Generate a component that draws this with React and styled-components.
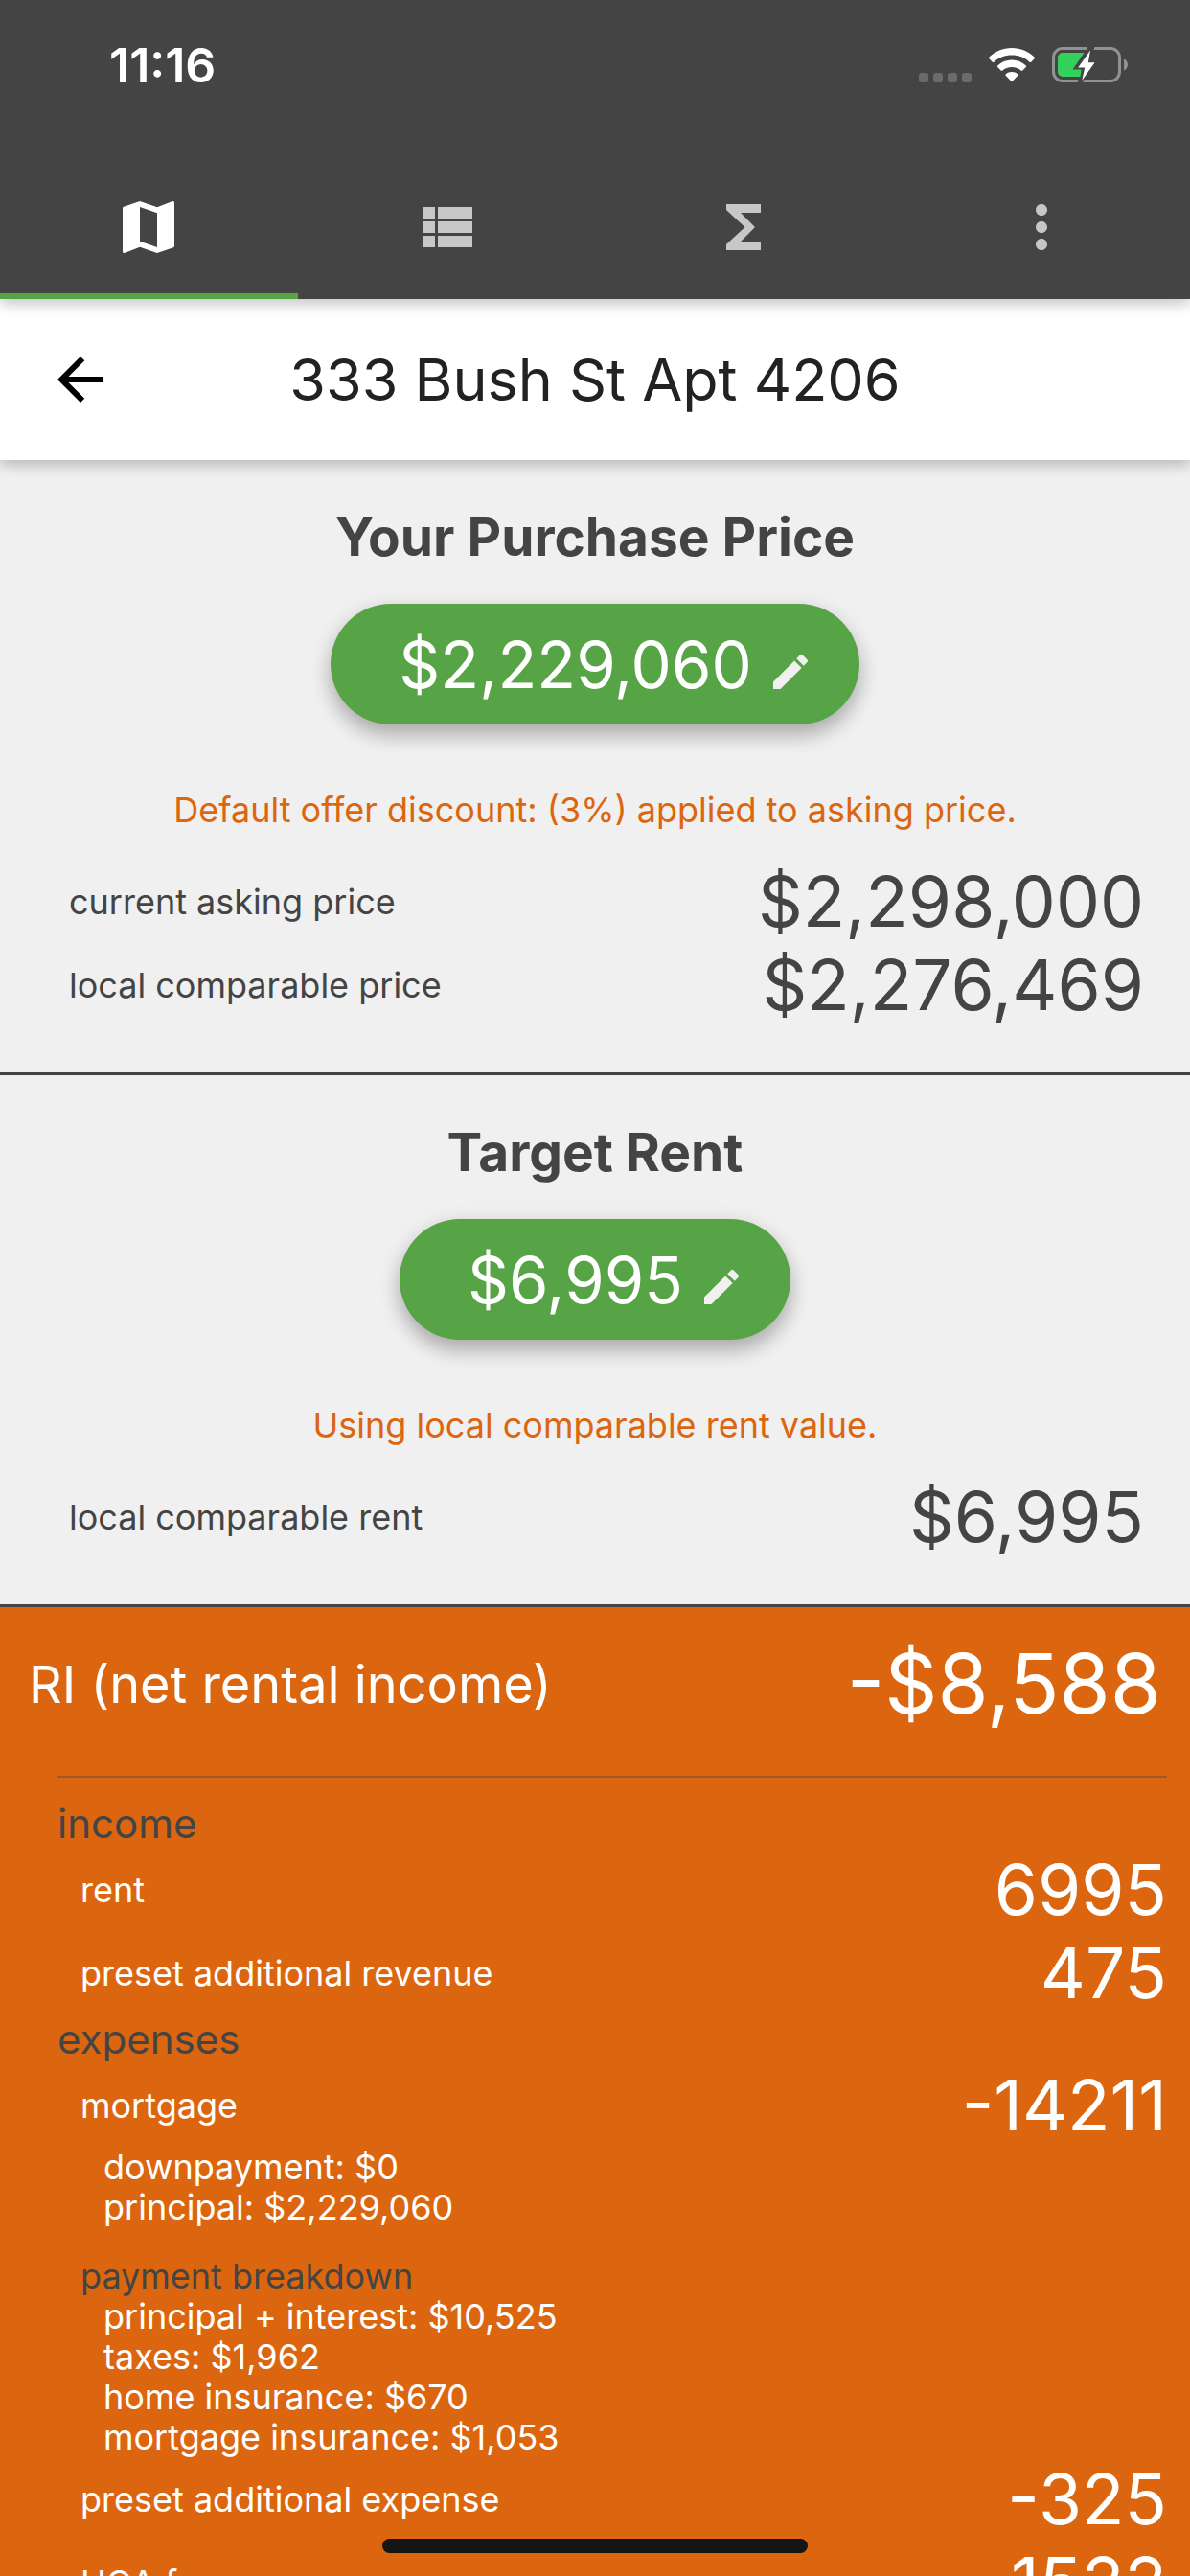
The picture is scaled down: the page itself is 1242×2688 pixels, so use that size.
import { useState } from 'react'
import styled, { createGlobalStyle } from 'styled-components'
import { MdMap, MdFunctions, MdMoreVert, MdEdit, MdArrowBack } from 'react-icons/md'

const tabs = [
  { id: 'map', label: 'Map', icon: <MdMap /> },
  { id: 'list', label: 'List', icon: <ListIcon /> },
  { id: 'totals', label: 'Totals', icon: <MdFunctions /> },
  { id: 'more', label: 'More', icon: <MdMoreVert /> },
]

function ListIcon() {
  return (
    <svg viewBox="0 0 24 24" width="1em" height="1em" fill="currentColor">
      <path d="M4 14h4v-4H4v4zm0 5h4v-4H4v4zM4 9h4V5H4v4zm5 5h12v-4H9v4zm0 5h12v-4H9v4zM9 5v4h12V5H9z" />
    </svg>
  )
}

function WifiIcon() {
  return (
    <svg viewBox="0 0 48 36" width="48" height="36" fill="#fff">
      <path d="M24 0C14.800 0 6.500 3.600.4 9.500a1.200 1.200 0 0 0 0 1.700l3.400 3.500c.5.500 1.200.5 1.700 0C10.300 10.200 16.800 7.600 24 7.600s13.700 2.600 18.500 7.100c.5.500 1.200.5 1.700 0l3.400-3.500a1.200 1.200 0 0 0 0-1.700C41.500 3.600 33.200 0 24 0z" />
      <path d="M24 12.600c-5.700 0-10.900 2.200-14.800 5.800a1.200 1.200 0 0 0 0 1.700l3.500 3.500c.4.500 1.100.5 1.600 0 2.600-2.300 6-3.600 9.700-3.600s7.100 1.300 9.700 3.600c.5.500 1.200.5 1.600 0l3.500-3.500a1.200 1.200 0 0 0 0-1.700c-3.900-3.600-9.100-5.800-14.800-5.800z" />
      <path d="M24 25c-2.400 0-4.500.9-6.200 2.300a1.200 1.200 0 0 0 0 1.700l5.400 5.600c.5.500 1.100.5 1.600 0l5.400-5.600a1.200 1.200 0 0 0 0-1.700C28.500 25.900 26.400 25 24 25z" />
    </svg>
  )
}

function BatteryIcon() {
  return (
    <svg viewBox="0 0 80 40" width="80" height="40">
      <rect x="1.500" y="2.500" width="69" height="34" rx="9.500" fill="none" stroke="#929292" strokeWidth="3" />
      <path d="M75 13.500c2.600 1 4 3.600 4 6s-1.400 5-4 6z" fill="#929292" />
      <path d="M11 7h22.500L21.600 24.500h9L29.500 32H11a5 5 0 0 1-5-5V12a5 5 0 0 1 5-5z" fill="#32d15b" />
      <path d="M38 0h7l-2.500 6h-8zM28 33h6.500l-3 6H26.500z" fill="#444" />
      <path d="M40 4.500 27.200 22.500h7L31.200 36 44.600 17.300h-6.800z" fill="#fff" />
    </svg>
  )
}

const incomeRows = [
  { label: 'rent', value: '6995' },
  { label: 'preset additional revenue', value: '475' },
]
const loanLines = ['downpayment: $0', 'principal: $2,229,060']
const paymentLines = [
  'principal + interest: $10,525',
  'taxes: $1,962',
  'home insurance: $670',
  'mortgage insurance: $1,053',
]
const otherExpenses = [
  { label: 'preset additional expense', value: '-325' },
  { label: 'HOA fees', value: '-1522' },
]

function PriceCard({ title, amount, note, rows }) {
  return (
    <Card>
      <CardTitle>{title}</CardTitle>
      <AmountButton>
        {amount}
        <MdEdit />
      </AmountButton>
      <Note>{note}</Note>
      <Rows>
        {rows.map((row) => (
          <Row key={row.label}>
            <dt>{row.label}</dt>
            <Value>{row.value}</Value>
          </Row>
        ))}
      </Rows>
    </Card>
  )
}

function App() {
  const [active, setActive] = useState('map')

  return (
    <>
      <GlobalStyle />
      <Screen>
        <TopBar>
          <StatusBar>
            <Clock>11:16</Clock>
            <StatusIcons>
              <Signal><i /><i /><i /><i /></Signal>
              <WifiIcon />
              <BatteryIcon />
            </StatusIcons>
          </StatusBar>
          <Tabs>
            {tabs.map((tab) => (
              <Tab key={tab.id} aria-label={tab.label} $active={active === tab.id} onClick={() => setActive(tab.id)}>
                {tab.icon}
              </Tab>
            ))}
          </Tabs>
        </TopBar>

        <Header>
          <BackButton aria-label="Back"><MdArrowBack /></BackButton>
          <Title>333 Bush St Apt 4206</Title>
        </Header>

        <PriceCard
          title="Your Purchase Price"
          amount="$2,229,060"
          note="Default offer discount: (3%) applied to asking price."
          rows={[
            { label: 'current asking price', value: '$2,298,000' },
            { label: 'local comparable price', value: '$2,276,469' },
          ]}
        />
        <PriceCard
          title="Target Rent"
          amount="$6,995"
          note="Using local comparable rent value."
          rows={[{ label: 'local comparable rent', value: '$6,995' }]}
        />

        <Summary>
          <SummaryHead>
            <SummaryTitle>RI (net rental income)</SummaryTitle>
            <SummaryTotal>-$8,588</SummaryTotal>
          </SummaryHead>
          <Details>
            <GroupTitle>income</GroupTitle>
            <Group>
              {incomeRows.map((row) => (
                <Row key={row.label}><dt>{row.label}</dt><Value>{row.value}</Value></Row>
              ))}
            </Group>
            <GroupTitle>expenses</GroupTitle>
            <Group>
              <Row><dt>mortgage</dt><Value>-14211</Value></Row>
            </Group>
            <Lines>
              {loanLines.map((line) => <li key={line}>{line}</li>)}
            </Lines>
            <LinesTitle>payment breakdown</LinesTitle>
            <Lines>
              {paymentLines.map((line) => <li key={line}>{line}</li>)}
            </Lines>
            <Group>
              {otherExpenses.map((row) => (
                <Row key={row.label}><dt>{row.label}</dt><Value>{row.value}</Value></Row>
              ))}
            </Group>
          </Details>
        </Summary>
        <HomeIndicator />
      </Screen>
    </>
  )
}

const GlobalStyle = createGlobalStyle`
  * {
    box-sizing: border-box;
  }
  body {
    margin: 0;
    background: #dc660f;
    font-family: Inter, "Liberation Sans", sans-serif;
    color: #444;
  }
  h1, h2, h3, h4, p, dl, dd, ul {
    margin: 0;
    padding: 0;
  }
  button {
    font: inherit;
    border: none;
    cursor: pointer;
  }
`

const Screen = styled.div`
  height: 100vh;
  overflow: hidden;
`
const TopBar = styled.header`
  position: relative;
  z-index: 2;
  background: #444;
  box-shadow: 0 6px 12px rgba(0, 0, 0, 0.16), 0 3px 18px rgba(0, 0, 0, 0.08);
`
const StatusBar = styled.div`
  display: flex;
  justify-content: space-between;
  align-items: center;
  height: 132px;
  padding: 3px 64px 0 114px;
`
const Clock = styled.span`
  font-size: 50px;
  font-weight: 600;
  color: #fff;
`
const StatusIcons = styled.div`
  display: flex;
  align-items: center;
  gap: 18px;
`
const Signal = styled.div`
  display: flex;
  align-self: flex-end;
  gap: 5px;
  padding-bottom: 2px;

  i {
    width: 10px;
    height: 10px;
    border-radius: 3px;
    background: #6b6b6b;
  }
`
const Tabs = styled.nav`
  display: flex;
`
const Tab = styled.button`
  flex: 1;
  display: flex;
  justify-content: center;
  align-items: center;
  height: 180px;
  padding: 60px 0 24px;
  background: none;
  border-bottom: 6px solid ${({ $active }) => ($active ? '#57a446' : 'transparent')};
  color: ${({ $active }) => ($active ? '#fff' : '#c7c7c7')};
  font-size: 72px;
`
const Header = styled.div`
  position: relative;
  z-index: 1;
  display: grid;
  grid-template-columns: 168px 1fr 168px;
  align-items: center;
  height: 168px;
  background: #fff;
  box-shadow: 0 6px 12px rgba(0, 0, 0, 0.16), 0 3px 18px rgba(0, 0, 0, 0.08);
`
const BackButton = styled.button`
  display: flex;
  justify-content: center;
  background: none;
  color: #000;
  font-size: 72px;
`
const Title = styled.h1`
  text-align: center;
  font-size: 61px;
  font-weight: 400;
  color: #222;
`
const Card = styled.section`
  display: flex;
  flex-direction: column;
  align-items: center;
  padding: 48px 0;
  background: #f0f0f0;
  border-bottom: 3px solid #444;
`
const CardTitle = styled.h2`
  font-size: 55px;
  font-weight: 700;
  line-height: 64px;
`
const AmountButton = styled.button`
  display: flex;
  align-items: center;
  gap: 16px;
  height: 126px;
  margin-top: 38px;
  padding: 0 48px 0 71px;
  border-radius: 63px;
  background: #57a446;
  box-shadow: 0 12px 20px rgba(0, 0, 0, 0.24), 0 3px 24px rgba(0, 0, 0, 0.08);
  color: #fff;
  font-size: 67px;

  svg {
    width: 48px;
    height: 48px;
    margin-top: 16px;
    color: #f0f0f0;
  }
`
const Note = styled.p`
  margin-top: 66px;
  font-size: 36px;
  line-height: 46px;
  color: #dc660f;
`
const Rows = styled.dl`
  align-self: stretch;
  margin-top: 29px;
  padding: 0 48px 0 72px;
`
const Row = styled.div`
  display: flex;
  justify-content: space-between;
  align-items: center;
  height: 87px;
  font-size: 36px;
`
const Value = styled.dd`
  font-size: 73px;
`
const Summary = styled.section`
  background: #dc660f;
  color: #fff;
`
const SummaryHead = styled.div`
  display: flex;
  justify-content: space-between;
  align-items: center;
  height: 160px;
  padding: 0 30px;
`
const SummaryTitle = styled.h2`
  font-size: 54px;
  font-weight: 400;
`
const SummaryTotal = styled.strong`
  font-size: 86px;
  font-weight: 400;
`
const Details = styled.div`
  margin: 16px 24px 0 60px;
  padding-top: 22px;
  border-top: 2px solid #9a5a30;
`
const GroupTitle = styled.h3`
  font-size: 42px;
  font-weight: 400;
  line-height: 51px;
  color: #444;
`
const Group = styled.dl`
  padding-left: 24px;
`
const Lines = styled.ul`
  padding-left: 48px;
  list-style: none;
  font-size: 36px;
  line-height: 42px;
`
const LinesTitle = styled.h4`
  margin-top: 30px;
  padding-left: 24px;
  font-size: 36px;
  font-weight: 400;
  line-height: 42px;
  color: #444;
`
const HomeIndicator = styled.div`
  position: fixed;
  bottom: 24px;
  left: 50%;
  width: 444px;
  height: 15px;
  margin-left: -222px;
  border-radius: 8px;
  background: #151515;
`

export default App
